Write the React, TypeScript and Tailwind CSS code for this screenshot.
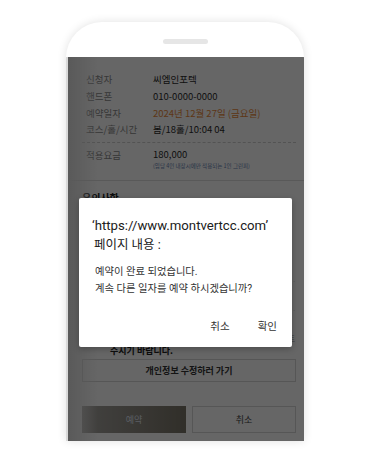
const font = { fontFamily: '"Noto Sans CJK KR", "Noto Sans", sans-serif' };

const rows = [
    { label: '신청자', value: '씨엠인포텍' },
    { label: '핸드폰', value: '010-0000-0000' },
    { label: '예약일자', value: '2024년 12월 27일 (금요일)', accent: true },
    { label: '코스/홀/시간', value: '봄/18홀/10:04  04' },
];

function AlertDialog() {
    // android style confirm() box
    return (
        <div
            className="absolute left-[11px] top-[141px] w-[213px] h-[149px] bg-white rounded-[2px] shadow-[0_2px_6px_rgba(0,0,0,0.25)] pl-[13px] pr-[12px] pt-[18px] flex flex-col"
            style={{ fontFamily: 'Roboto, "Noto Sans CJK KR", sans-serif' }}
        >
            <p className="text-[13.2px] leading-[19px] text-[#202020] whitespace-nowrap">‘https://www.montvertcc.com’</p>
            <p className="text-[12.5px] leading-[19px] text-[#202020] ml-[2px]">페이지 내용 :</p>
            <div className="mt-[9px] ml-[3px] text-[10.3px] leading-[17px] text-[#333]">
                <p>예약이 완료 되었습니다.</p>
                <p>계속 다른 일자를 예약 하시겠습니까?</p>
            </div>
            <div className="mt-auto mb-[12px] flex justify-end gap-[28px] pr-[3px] text-[10.5px] text-[#333]">
                <span>취소</span>
                <span>확인</span>
            </div>
        </div>
    );
}

export default function App() {
    return (
        <div className="w-[367px] h-[459px] bg-white overflow-hidden pt-[22px] pl-[66px]" style={font}>
            <div className="w-[238px] h-[419px] rounded-t-[36px] bg-white shadow-[0_0_10px_rgba(0,0,0,0.12)] overflow-hidden flex flex-col">
                {/* top of phone with speaker slot */}
                <div className="h-[35px] flex justify-center pt-[17px] shrink-0">
                    <div className="w-[45px] h-[5px] rounded-full bg-[#e6e6e6]" />
                </div>

                <div className="relative h-[384px] bg-white border-l-[2px] border-l-[#d9d9d9]">
                    <div className="absolute inset-y-0 left-0 w-[30px] bg-gradient-to-r from-[#e0e0e0] to-white/0" />
                    {/* page under the alert */}
                    <div className="pl-[18px] pr-[8px] pt-[14px]">
                        <div className="flex flex-col">
                            {rows.map((row) => (
                                <div key={row.label} className="flex h-[16.7px] items-center text-[9.5px]">
                                    <span className="w-[67px] text-[#8a8a8a]">{row.label}</span>
                                    <span className={row.accent ? 'text-[#e9893a]' : 'text-[#2a2a2a]'}>{row.value}</span>
                                </div>
                            ))}
                        </div>
                        <div className="mt-[4px] -ml-[4px] border-t border-dashed border-[#cfcfcf]" />
                        <div className="flex mt-[5px] text-[9.5px]">
                            <span className="w-[67px] text-[#8a8a8a]">적용요금</span>
                            <div className="flex flex-col">
                                <span className="text-[#2a2a2a] leading-[13px]">180,000</span>
                                <span className="text-[5.5px] text-[#6680b0] leading-[10px]">(임당 4인 내장시에만 적용되는 1인 그린피)</span>
                            </div>
                        </div>
                    </div>
                    <div className="mt-[9px] border-t border-[#dedede]" />
                    <div className="pl-[14px] pr-[8px]">
                        <p className="mt-[9px] text-[10px] font-bold text-[#222]">유의사항</p>
                        <div className="h-[142px] flex flex-col items-end pt-[70px] gap-[20px] text-[#bbb] text-[6px] pr-[1px]">
                            <span>.</span>
                            <span>.</span>
                            <span className="text-[8px] text-[#888]">트</span>
                        </div>
                        <p className="pl-[28px] -mt-[2px] text-[9px] font-bold text-[#222] leading-[12px]">주시기 바랍니다.</p>
                        <div className="mt-[2px] h-[23px] border border-[#d8d8d8] flex items-center justify-center text-[9px] font-bold text-[#333]">
                            개인정보 수정하러 가기
                        </div>
                        <div className="mt-[24px] flex gap-[6px]">
                            <div className="w-[105px] h-[27px] bg-gradient-to-r from-[#a8a6a2] to-[#7a7568] flex items-center justify-center text-[9px] text-[#dfe4f2]">예약</div>
                            <div className="w-[105px] h-[27px] border border-[#d8d8d8] flex items-center justify-center text-[9px] text-[#444]">취소</div>
                        </div>
                    </div>

                    {/* dim layer */}
                    <div className="absolute inset-0 bg-black/60" />
                    <AlertDialog />
                </div>
            </div>
        </div>
    );
}
